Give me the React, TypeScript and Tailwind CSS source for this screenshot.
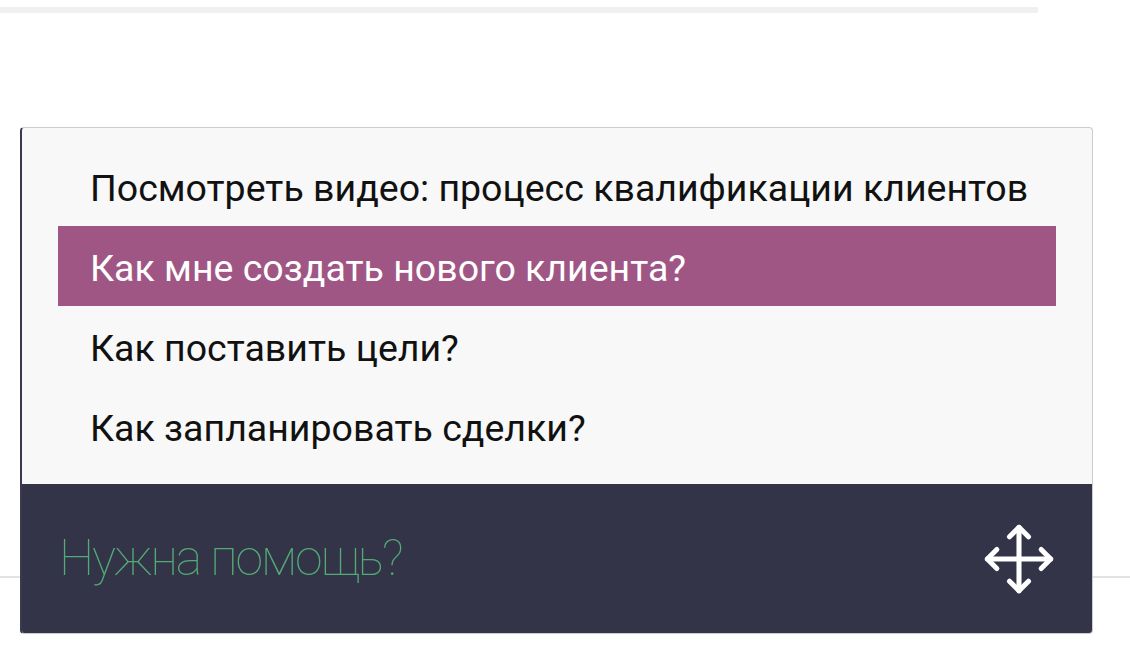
import React from 'react';
import { Move } from 'lucide-react';

const questions = [
  'Посмотреть видео: процесс квалификации клиентов',
  'Как мне создать нового клиента?',
  'Как поставить цели?',
  'Как запланировать сделки?',
];

export default function App() {
  const active = 1;

  return (
    <div className="relative h-[664px] w-[1130px] overflow-hidden bg-white font-['Roboto',sans-serif]">
      {/* page behind the widget */}
      <div className="mt-[7px] h-[6px] w-[1038px] bg-[#f0f0f0]" />
      <div className="mt-[563px] h-[2px] w-full bg-[#e2e2e2]" />

      {/* help widget */}
      <div className="absolute left-[20px] top-[127px] flex w-[1073px] flex-col overflow-hidden rounded-[4px] border border-l-2 border-[#cbcbcb] border-l-[#3a3a4e] bg-[#f8f8f8]">
        <ul className="px-[36px] py-[18px]">
          {questions.map((q, i) => (
            <li
              key={q}
              className={
                'flex h-[80px] items-center pl-[32px] pt-[5px] text-[37.5px] ' +
                (i === active ? 'bg-[#a05684] text-white' : 'text-[#111]')
              }
            >
              {q}
            </li>
          ))}
        </ul>
        <div className="flex h-[149px] items-center justify-between bg-[#343449] pl-[37px] pr-[35px]">
          <span className="text-[50px] font-thin tracking-[-2px] text-[#52aa76]">Нужна помощь?</span>
          <Move size={76} strokeWidth={1.6} color="#ffffff" />
        </div>
      </div>
    </div>
  );
}
